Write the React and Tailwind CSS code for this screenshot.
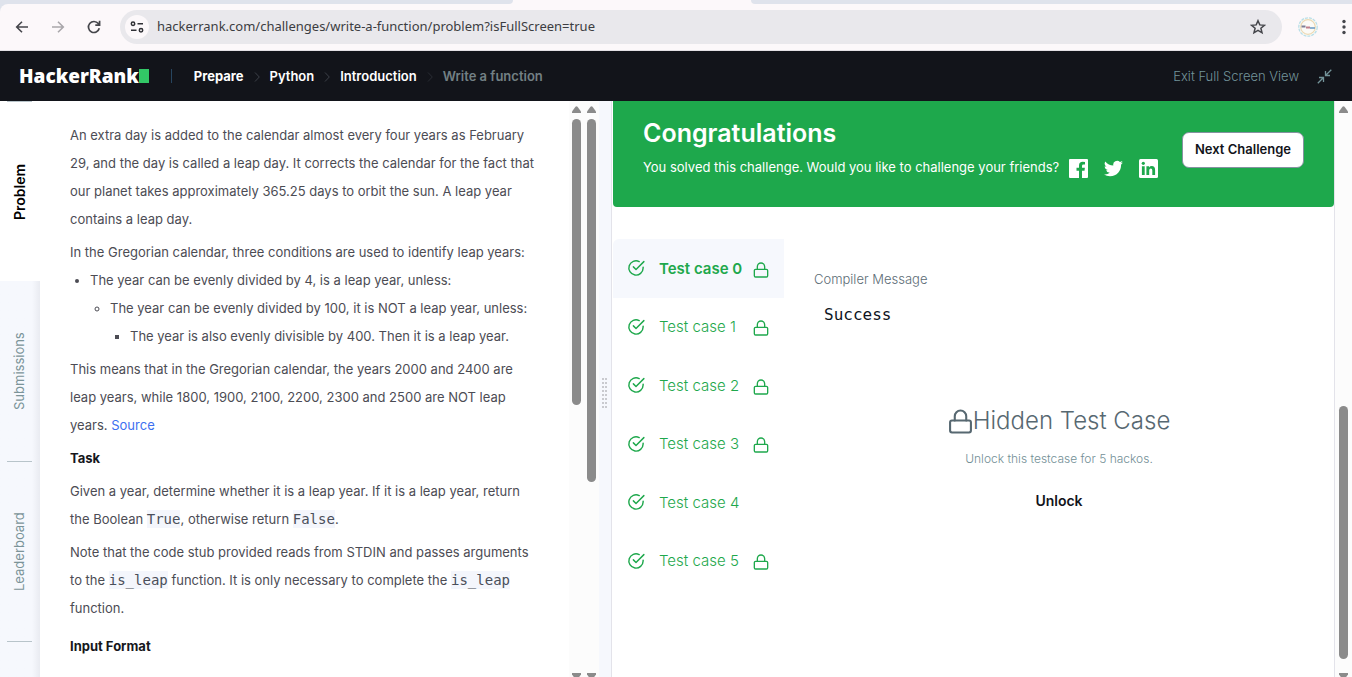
import React from "react";

const CheckIcon = () => (
  <svg className="size-[18px] shrink-0" viewBox="0 0 24 24" fill="none" stroke="currentColor" strokeWidth="1.9" strokeLinecap="round" strokeLinejoin="round" aria-hidden="true">
    <path d="M21.5 10.8V12a9.5 9.5 0 1 1-5.2-8.5" />
    <path d="M22.5 3.5 12 14l-3.5-3.5" />
  </svg>
);

const LockIcon = ({ className, strokeWidth = 2 }) => (
  <svg className={className} viewBox="0 0 24 24" fill="none" stroke="currentColor" strokeWidth={strokeWidth} strokeLinecap="round" strokeLinejoin="round" aria-hidden="true">
    <rect x="2" y="11" width="20" height="11.5" rx="1.8" />
    <path d="M6.5 11V7a5.5 5.5 0 0 1 11 0v4" />
  </svg>
);

const Arrow = ({ down }) => (
  <svg className="h-[7px] w-[9px] shrink-0" viewBox="0 0 9 7" fill="#8b8b8b" aria-hidden="true">
    {down ? <path d="M0 0h9v1.5L5.5 6.3q-1 1-2 0L0 1.5z" /> : <path d="M0 7h9V5.5L5.5.7q-1-1-2 0L0 5.5z" />}
  </svg>
);

const Scrollbar = ({ thumb, before, after, wide }) => (
  <div className={`flex shrink-0 flex-col items-center bg-[#fcfcfc] pt-[5px] ${wide ? "w-[17px]" : "w-[15px]"}`} aria-hidden="true">
    <Arrow />
    <div className="flex w-[9px] flex-1 flex-col py-[6px]">
      <div style={{ flexGrow: before }} />
      <div className="rounded-full bg-[#8b8b8b]" style={{ flexGrow: thumb }} />
      <div style={{ flexGrow: after }} />
    </div>
    <div className="h-[4px] overflow-hidden">
      <Arrow down />
    </div>
  </div>
);

function BrowserBar() {
  return (
    <div className="shrink-0 bg-[#dfe3ec]">
      <div className="flex h-1 bg-[#fcf8fa]">
        <div className="w-[513px] rounded-br-lg bg-[#dfe3ec]" />
        <div className="w-[238px]" />
        <div className="flex-1 rounded-bl-lg bg-[#dfe3ec]" />
      </div>
      <div className="flex h-[47px] items-center rounded-tl-lg border-b border-[#e3e0e4] bg-[#fcf8fa] pl-[14px]">
        <button aria-label="Back" className="flex w-4 justify-center text-[#45464b]">
          <svg className="size-4" viewBox="0 0 16 16" fill="none" stroke="currentColor" strokeWidth="1.6"><path d="M14 8H3M8 2.7 2.7 8 8 13.3" /></svg>
        </button>
        <button aria-label="Forward" className="ml-5 flex w-4 justify-center text-[#a9a7ab]">
          <svg className="size-4" viewBox="0 0 16 16" fill="none" stroke="currentColor" strokeWidth="1.6"><path d="M2 8h11M8 2.7 13.3 8 8 13.3" /></svg>
        </button>
        <button aria-label="Reload" className="ml-5 flex w-4 justify-center text-[#45464b]">
          <svg className="size-4" viewBox="0 0 16 16" fill="none" stroke="currentColor" strokeWidth="1.7"><path d="M13.3 9.3A5.5 5.5 0 1 1 12.3 4.6L13.3 5.8M13.6 1.8v4.3H9.3" /></svg>
        </button>
        <div className="ml-[18px] flex h-[34px] flex-1 items-center rounded-full bg-[#e9e8ec] pl-[5px] pr-4">
          <button aria-label="View site information" className="flex size-6 items-center justify-center rounded-full bg-[#fcf8fa] text-[#303136]">
            <svg className="h-3 w-[14px]" viewBox="0 0 14 12" fill="none" stroke="currentColor" strokeWidth="1.5"><circle cx="3" cy="2.7" r="1.7" /><path d="M7.5 2.7H13M1 9.3h5.5" /><circle cx="11" cy="9.3" r="1.7" /></svg>
          </button>
          <input aria-label="Address" className="ml-2 min-w-0 flex-1 bg-transparent font-['Noto_Sans',sans-serif] text-[13px] text-[#3c3d42] outline-none" defaultValue="hackerrank.com/challenges/write-a-function/problem?isFullScreen=true" />
          <button aria-label="Bookmark" className="text-[#45464b]">
            <svg className="size-4" viewBox="0 0 16 16" fill="none" stroke="currentColor" strokeWidth="1.5"><path d="M8 1.7l1.8 4.2 4.6.4-3.5 3 1.1 4.5L8 11.4l-4 2.4 1.1-4.5-3.5-3 4.6-.4z" /></svg>
          </button>
        </div>
        <button aria-label="Profile" className="ml-4">
          <svg className="size-5" viewBox="0 0 20 20" fill="none">
            <circle cx="10" cy="10" r="9.2" fill="#fbfaf6" stroke="#b9dfe8" strokeWidth="1.3" strokeDasharray="3 1" />
            <circle cx="10" cy="10" r="7.3" stroke="#ecd9b4" strokeWidth="1.2" />
            <path d="M3.5 9.5h4" stroke="#7d7f96" strokeWidth="2" /><path d="M8 10.5h4" stroke="#c07f8d" strokeWidth="2" /><path d="M12 11h5" stroke="#6f9cc4" strokeWidth="1.6" />
          </svg>
        </button>
        <button aria-label="Menu" className="ml-[17px] flex w-[17px] justify-center text-[#45464b]">
          <svg className="h-4 w-1" viewBox="0 0 4 16" fill="currentColor"><circle cx="2" cy="2.5" r="1.7" /><circle cx="2" cy="8" r="1.7" /><circle cx="2" cy="13.5" r="1.7" /></svg>
        </button>
      </div>
    </div>
  );
}

const Chevron = ({ className }) => (
  <svg className={`mx-[10px] h-[10px] w-[6px] ${className}`} viewBox="0 0 6 10" fill="none" stroke="currentColor" aria-hidden="true"><path d="M1 .5 5.3 5 1 9.5" /></svg>
);

function NavBar() {
  return (
    <header className="flex h-[50px] shrink-0 items-center bg-[#12141a] pl-[19px] pr-5 text-[13px]">
      <a href="#home" className="flex items-center font-['Open_Sans',sans-serif] text-[19px] font-extrabold text-white">
        HackerRank<span className="h-[14px] w-[10px] bg-[#32c766]" />
      </a>
      <span className="mx-[22px] h-[14px] w-px bg-[#27455f]" />
      <nav className="flex items-center pt-px font-semibold text-white" aria-label="Breadcrumb">
        <a href="#prepare" className="font-bold">Prepare</a>
        <Chevron className="text-[#3d4149]" />
        <a href="#python">Python</a>
        <Chevron className="text-[#3d4149]" />
        <a href="#introduction">Introduction</a>
        <Chevron className="text-[#2a2d34]" />
        <span className="text-[#738084]">Write a function</span>
      </nav>
      <a href="#exit" className="ml-auto flex items-center pt-px font-light text-[#739399]">
        Exit Full Screen View
        <svg className="ml-[18px] size-[15px]" viewBox="0 0 15 15" fill="none" stroke="currentColor" strokeWidth="1.3" aria-hidden="true"><path d="M14.3.8 8.5 6.5M8.5 2v4.5H13M.8 14.3l5.7-5.8M2 8.5h4.5V13" /></svg>
      </a>
    </header>
  );
}

const Divider = ({ hidden }) => <span className={`h-px w-[25px] ${hidden ? "" : "bg-[#b8c4ca]"}`} />;

const SideTab = ({ children, active, plain }) => (
  <button role="tab" aria-selected={!!active} className={`flex h-[180px] w-full shrink-0 flex-col items-center pr-px ${active ? "bg-white text-[14px] font-semibold text-black" : "text-[13px] text-[#7b9499]"}`}>
    <Divider hidden={plain} />
    <span className="flex flex-1 rotate-180 items-center justify-center [writing-mode:vertical-rl]">{children}</span>
  </button>
);

const Code = ({ children }) => (
  <code className="bg-[#f4f6fc] py-px font-['DejaVu_Sans_Mono',monospace] text-[14px] leading-4 text-[#4a4f5a]">{children}</code>
);

function Problem() {
  return (
    <main className="min-w-0 flex-1 overflow-hidden whitespace-nowrap bg-white pl-[30px] pt-5 text-[13px] leading-7 text-[#4c4c54]">
      <p>An extra day is added to the calendar almost every four years as February<br />29, and the day is called a leap day. It corrects the calendar for the fact that<br />our planet takes approximately 365.25 days to orbit the sun. A leap year<br />contains a leap day.</p>
      <p className="mt-[5px]">In the Gregorian calendar, three conditions are used to identify leap years:</p>
      <ul className="list-disc pl-5">
        <li>The year can be evenly divided by 4, is a leap year, unless:
          <ul className="list-[circle] pl-5">
            <li>The year can be evenly divided by 100, it is NOT a leap year, unless:
              <ul className="list-[square] pl-5">
                <li>The year is also evenly divisible by 400. Then it is a leap year.</li>
              </ul>
            </li>
          </ul>
        </li>
      </ul>
      <p className="mt-[5px]">This means that in the Gregorian calendar, the years 2000 and 2400 are<br />leap years, while 1800, 1900, 2100, 2200, 2300 and 2500 are NOT leap<br />years. <a href="#source" className="text-[#3d6ff0]">Source</a></p>
      <h2 className="mt-[5px] font-bold text-[#16171c]">Task</h2>
      <p className="mt-[5px]">Given a year, determine whether it is a leap year. If it is a leap year, return<br />the Boolean <Code>True</Code>, otherwise return <Code>False</Code>.</p>
      <p className="mt-[5px]">Note that the code stub provided reads from STDIN and passes arguments<br />to the <Code>is_leap</Code> function. It is only necessary to complete the <Code>is_leap</Code><br />function.</p>
      <h2 className="mt-[10px] font-bold text-[#16171c]">Input Format</h2>
    </main>
  );
}

const CASES = [
  { name: "Test case 0", locked: true },
  { name: "Test case 1", locked: true },
  { name: "Test case 2", locked: true },
  { name: "Test case 3", locked: true },
  { name: "Test case 4", locked: false },
  { name: "Test case 5", locked: true },
];

function Results() {
  return (
    <section className="min-w-0 flex-1 overflow-hidden border-x border-[#e3e3ea] bg-white pl-px">
      <div className="flex h-[106px] items-start rounded-b bg-[#1ea84c] px-[30px] text-white">
        <div className="pt-4">
          <h1 className="text-[25px] font-semibold leading-8">Congratulations</h1>
          <div className="mt-1 flex h-[30px] items-center text-[13px]">
            <p className="whitespace-nowrap">You solved this challenge. Would you like to challenge your friends?</p>
            <a href="#facebook" aria-label="Facebook" className="ml-[10px]">
              <svg className="size-[19px]" viewBox="0 0 19 19" fill="white"><path fillRule="evenodd" d="M1 0h17q1 0 1 1v17q0 1-1 1h-5v-7.3h2.5l.4-2.9H13V7q0-1.4 1.5-1.4H16V3q-1-.2-2.2-.2Q10 2.8 10 6.5v2.3H7.5v2.9H10V19H1q-1 0-1-1V1q0-1 1-1z" /></svg>
            </a>
            <a href="#twitter" aria-label="Twitter" className="ml-4">
              <svg className="size-[19px]" viewBox="0 0 24 24" fill="white"><path d="M23.95 4.57a10 10 0 0 1-2.82.77 4.96 4.96 0 0 0 2.16-2.72c-.95.55-2 .96-3.13 1.18a4.92 4.92 0 0 0-8.38 4.48A13.98 13.98 0 0 1 1.64 3.16a4.92 4.92 0 0 0 1.52 6.57 4.9 4.9 0 0 1-2.23-.61v.06a4.92 4.92 0 0 0 3.95 4.83 4.99 4.99 0 0 1-2.21.08 4.94 4.94 0 0 0 4.6 3.42A9.87 9.87 0 0 1 0 19.54a13.99 13.99 0 0 0 7.55 2.21c9.05 0 14-7.5 14-13.99 0-.21 0-.42-.02-.63a9.94 9.94 0 0 0 2.42-2.56z" /></svg>
            </a>
            <a href="#linkedin" aria-label="LinkedIn" className="ml-4">
              <svg className="size-[19px]" viewBox="0 0 19 19"><rect width="19" height="19" rx="1.5" fill="white" /><g fill="#1ea84c"><circle cx="4.3" cy="4.3" r="1.6" /><path d="M2.9 7.2h2.8v8.9H2.9zM7.4 7.2h2.7v1.2q.9-1.4 2.7-1.4 3.3 0 3.3 4v5.1h-2.8v-4.6q0-2.1-1.5-2.1-1.6 0-1.6 2.2v4.5H7.4z" /></g></svg>
            </a>
          </div>
        </div>
        <button className="ml-auto mt-[31px] h-9 rounded-[7px] border border-[#8592a0] bg-white px-3 text-[13px] font-semibold whitespace-nowrap text-[#12141a]">Next Challenge</button>
      </div>
      <div className="flex pt-8">
        <div role="tablist" className="grid h-[351px] w-[171px] shrink-0 grid-rows-6">
          {CASES.map((c, i) => (
            <button key={c.name} role="tab" aria-selected={i === 0} className={`flex items-center pl-[14px] text-[#1ea84c] ${i === 0 ? "rounded-tl-md bg-[#f6f8fd] font-semibold" : "font-light"}`}>
              <CheckIcon />
              <span className="ml-[14px] w-[94px] pt-px text-left text-[15px]">{c.name}</span>
              {c.locked && <LockIcon className="mt-[3px] size-4 shrink-0" />}
            </button>
          ))}
        </div>
        <div className="min-w-0 flex-1 px-[30px] pt-[30px]">
          <h2 className="text-[13px] font-light leading-5 text-[#5c6c75]">Compiler Message</h2>
          <pre className="ml-[10px] mt-[14px] font-['DejaVu_Sans_Mono',monospace] text-[16px] leading-6 text-[#0e141e]">Success</pre>
          <div className="mt-[78px] flex flex-col items-center">
            <h3 className="flex items-center text-[24px] font-light leading-8 text-[#576871]">
              <LockIcon className="size-[25px]" />Hidden Test Case
            </h3>
            <p className="mt-3 text-[12px] font-light leading-5 text-[#738f96]">Unlock this testcase for 5 hackos.</p>
            <button className="mt-[22px] text-[14px] font-semibold leading-5 text-[#12141a]">Unlock</button>
          </div>
        </div>
      </div>
    </section>
  );
}

export default function App() {
  return (
    <div className="flex h-screen flex-col overflow-hidden bg-white font-[Inter,sans-serif]">
      <BrowserBar />
      <NavBar />
      <div className="flex min-h-0 flex-1">
        <div className="flex min-h-0 w-[599px] shrink-0">
          <div role="tablist" className="flex w-10 shrink-0 flex-col overflow-hidden bg-gradient-to-r from-[#f6f8fd] from-80% to-[#e9ebf1]">
            <SideTab active>Problem</SideTab>
            <SideTab plain>Submissions</SideTab>
            <SideTab>Leaderboard</SideTab>
            <div className="flex justify-center pr-px"><Divider /></div>
          </div>
          <Problem />
          <Scrollbar before={0} thumb={285} after={262} />
          <Scrollbar before={0} thumb={362} after={185} />
        </div>
        <div className="flex w-3 shrink-0 items-center justify-center bg-[#f6f8fd] pr-px pt-2">
          <div className="grid grid-cols-2 gap-x-px gap-y-[2px]" aria-hidden="true">
            {Array.from({ length: 16 }, (_, i) => <span key={i} className="size-[2px] bg-[#c9cacf]" />)}
          </div>
        </div>
        <Results />
        <Scrollbar wide before={286} thumb={253} after={8} />
      </div>
    </div>
  );
}
